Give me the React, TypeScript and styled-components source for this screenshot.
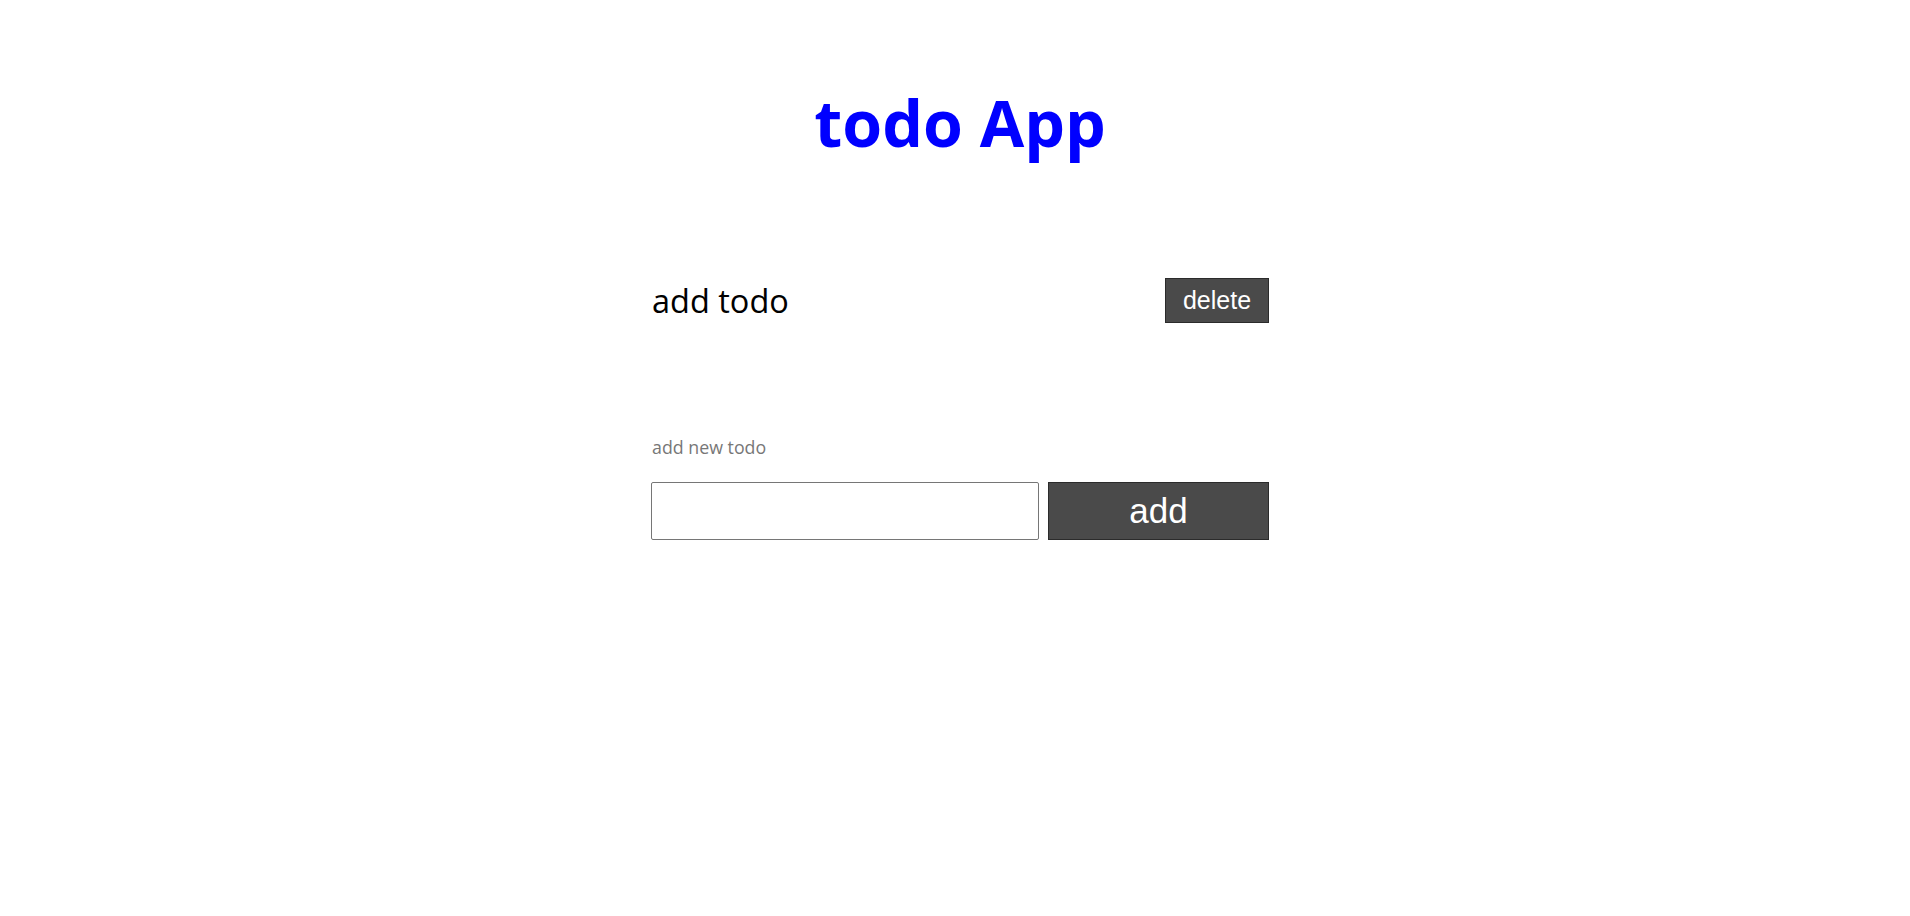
import { useState } from "react";
import styled, { createGlobalStyle } from "styled-components";

const GlobalStyle = createGlobalStyle`
  html, body {
    margin: 0;
    padding: 0;
    background: #ffffff;
  }
  body {
    font-family: "Open Sans", "Noto Sans", sans-serif;
    color: #000000;
  }
`;

const Page = styled.div`
  padding: 82px 0 0 10px;
  min-height: 916px;
  box-sizing: border-box;
`;

const Title = styled.h1`
  margin: 0;
  text-align: center;
  font-size: 64.5px;
  line-height: 80px;
  font-weight: 700;
  color: #0000ff;
`;

const Container = styled.div`
  width: 618px;
  margin: 116px auto 0;
`;

const TodoList = styled.ul`
  margin: 0;
  padding: 0;
  list-style: none;
`;

const TodoItem = styled.li`
  display: flex;
  align-items: center;
  justify-content: space-between;
  height: 45px;
`;

const TodoText = styled.span`
  font-size: 32.5px;
  line-height: 45px;
  padding-left: 1px;
`;

const Button = styled.button<{ $size: "small" | "large" }>`
  box-sizing: border-box;
  padding: 0;
  border: 1px solid #2b2b2b;
  background: #4a4a4a;
  color: #ffffff;
  font-family: "Liberation Sans", Arial, sans-serif;
  cursor: pointer;
  width: ${({ $size }) => ($size === "small" ? "104px" : "221px")};
  height: ${({ $size }) => ($size === "small" ? "45px" : "58px")};
  font-size: ${({ $size }) => ($size === "small" ? "25px" : "35px")};
`;

const Label = styled.label`
  display: block;
  margin-top: 112px;
  font-size: 17.8px;
  line-height: 24px;
  color: #777777;
  padding-left: 1px;
`;

const Form = styled.form`
  display: flex;
  gap: 9px;
  margin-top: 23px;
`;

const Input = styled.input`
  box-sizing: border-box;
  width: 388px;
  height: 58px;
  margin: 0;
  padding: 0 8px;
  border: 1px solid #767676;
  border-radius: 2px;
  background: #ffffff;
  font-family: "Open Sans", sans-serif;
  font-size: 24px;
  outline: none;
`;

export default function App() {
  const [todos, setTodos] = useState<string[]>(["add todo"]);
  const [value, setValue] = useState("");

  const addTodo = (e: React.FormEvent) => {
    e.preventDefault();
    if (!value.trim()) return;
    setTodos([...todos, value.trim()]);
    setValue("");
  };

  const deleteTodo = (index: number) => {
    setTodos(todos.filter((_, i) => i !== index));
  };

  return (
    <Page>
      <GlobalStyle />
      <Title>todo App</Title>
      <Container>
        <TodoList>
          {todos.map((todo, i) => (
            <TodoItem key={i}>
              <TodoText>{todo}</TodoText>
              <Button $size="small" onClick={() => deleteTodo(i)}>delete</Button>
            </TodoItem>
          ))}
        </TodoList>
        <Label htmlFor="new-todo">add new todo</Label>
        <Form onSubmit={addTodo}>
          <Input id="new-todo" value={value} onChange={(e) => setValue(e.target.value)} />
          <Button $size="large" type="submit">add</Button>
        </Form>
      </Container>
    </Page>
  );
}
